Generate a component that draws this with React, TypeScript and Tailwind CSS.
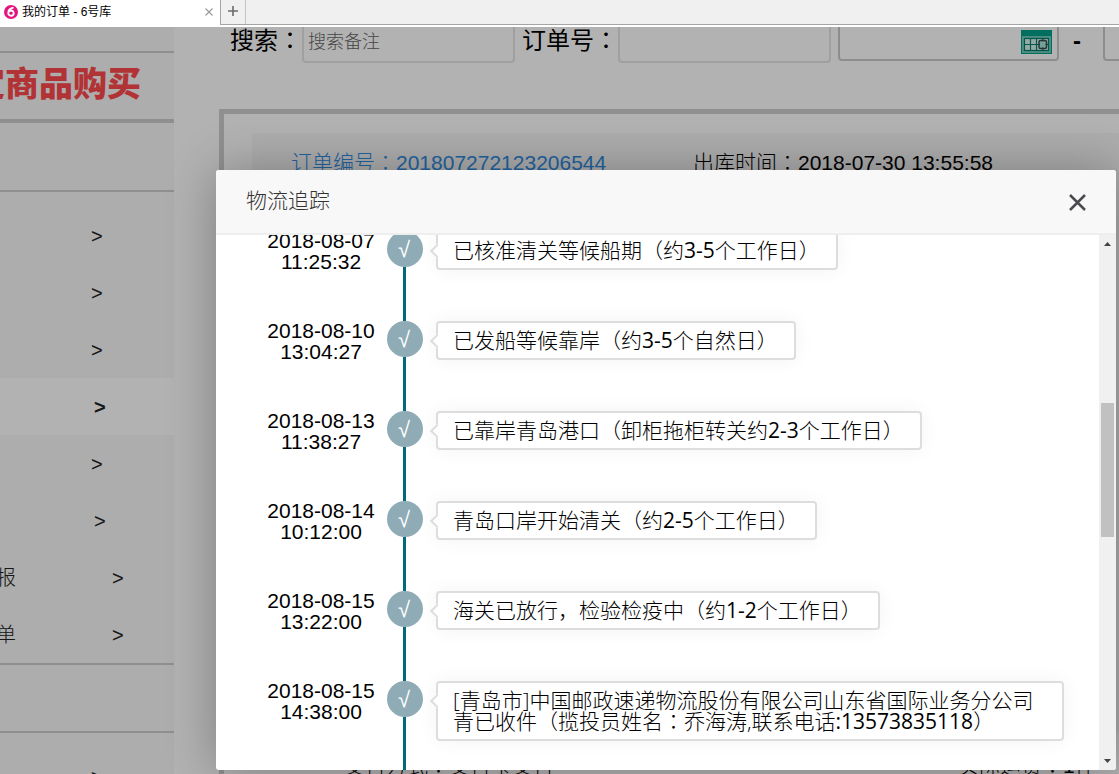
import React from "react";

const menu = [
  { label: "", gap: "ml-[75px]" },
  { label: "", gap: "ml-[75px]" },
  { label: "", gap: "ml-[75px]" },
  { label: "", gap: "ml-[78px]", active: true },
  { label: "", gap: "ml-[75px]" },
  { label: "", gap: "ml-[78px]" },
  { label: "报", gap: "ml-[96px]" },
  { label: "单", gap: "ml-[96px]" },
];

const events = [
  { date: "2018-08-07", time: "11:25:32", lines: ["已核准清关等候船期（约3-5个工作日）"] },
  { date: "2018-08-10", time: "13:04:27", lines: ["已发船等候靠岸（约3-5个自然日）"] },
  { date: "2018-08-13", time: "11:38:27", lines: ["已靠岸青岛港口（卸柜拖柜转关约2-3个工作日）"] },
  { date: "2018-08-14", time: "10:12:00", lines: ["青岛口岸开始清关（约2-5个工作日）"] },
  { date: "2018-08-15", time: "13:22:00", lines: ["海关已放行，检验检疫中（约1-2个工作日）"] },
  {
    date: "2018-08-15",
    time: "14:38:00",
    wide: true,
    lines: ["[青岛市]中国邮政速递物流股份有限公司山东省国际业务分公司", "青已收件（揽投员姓名：乔海涛,联系电话:13573835118）"],
  },
];

/* Latin digits are set in regular weight and full-width colons sit mid-cell. */
function Mixed({ text }: { text: string }) {
  return (
    <>
      {text.split(/([\d:-]+|：)/).map((part, i) => {
        if (part === "：") return <span key={i} className="font-['Noto_Sans_CJK_TC',sans-serif] leading-0">{part}</span>;
        if (/^[\d:-]+$/.test(part)) return <span key={i} className="font-normal">{part}</span>;
        return part;
      })}
    </>
  );
}

function TabBar() {
  return (
    <header className="flex h-[27px] shrink-0 bg-white text-xs text-black">
      <div className="flex w-[220px] items-center pb-1 pl-1">
        <svg className="size-[14px] shrink-0" viewBox="0 0 14 14">
          <circle cx="7" cy="7" r="7" fill="#e4147f" />
          <path d="M9.600 2.600C6.400 3 4.300 5 4.300 8a2.700 2.600 0 1 0 2.800-2.500c-1.100 0-2 .5-2.500 1.400" fill="none" stroke="#fff" strokeWidth="1.900" />
        </svg>
        <span className="ml-1 flex-1">我的订单 - 6号库</span>
        <button aria-label="关闭标签" className="mr-[7px]">
          <svg className="size-2" viewBox="0 0 8 8" stroke="#999" strokeWidth="1.1">
            <path d="M.5.5l7 7M7.5.5l-7 7" />
          </svg>
        </button>
      </div>
      <div className="flex h-[25px] flex-1 border-b border-l border-[#a5a5a5] bg-[#f0f0f0]">
        <button aria-label="新标签" className="flex w-[25px] items-center justify-center border-r border-[#c4c4c4] pb-0.5">
          <svg className="size-[10px]" viewBox="0 0 10 10" stroke="#6b6b6b" strokeWidth="1.6">
            <path d="M5 0v10M0 5h10" />
          </svg>
        </button>
      </div>
    </header>
  );
}

function Sidebar() {
  return (
    <nav className="w-[174px] shrink-0 bg-[#f8f8f8] text-[#222]">
      <div className="h-[26px] border-b-2 border-[#cdcdcd]" />
      <div className="flex h-[70px] items-center justify-end overflow-hidden border-b-4 border-[#cdcdcd] pr-[33px] pb-1 text-[34px] font-black whitespace-nowrap text-[#ff4a4e]">
        定商品购买
      </div>
      <div className="h-[69px] border-b-2 border-[#cdcdcd]" />
      <ul className="border-b-2 border-[#cdcdcd] pt-[15px]">
        {menu.map((m, i) => (
          <li key={i} className={m.active ? "bg-white font-bold" : ""}>
            <a href="#" className="flex h-[57px] items-center text-[20px]">
              <span className="flex w-4 justify-end overflow-hidden font-light">{m.label}</span>
              <span className={m.gap}>&gt;</span>
            </a>
          </li>
        ))}
      </ul>
      <div className="h-[68px] border-b-2 border-[#cdcdcd]" />
      <a href="#" className="mt-[15px] flex h-[57px] items-center pl-[91px] text-[20px]">
        &gt;
      </a>
    </nav>
  );
}

function CalendarIcon() {
  return (
    <svg className="h-6 w-[31px]" viewBox="0 0 31 24">
      <rect width="31" height="24" fill="#00a08a" />
      <rect x="1" y="6" width="29" height="17" fill="#6fc9b8" />
      <rect x="3.500" y="8.500" width="24" height="12" fill="#d8f3ee" stroke="#00806e" strokeWidth="1.2" />
      <path d="M3.500 14.500H18M9.500 8.500v12M15.500 8.500v12" fill="none" stroke="#00806e" strokeWidth="1.2" />
      <rect x="18" y="10.500" width="7.500" height="8" rx="1.500" fill="#a8e6da" stroke="#33514d" strokeWidth="1.500" />
      <path d="M21.800 8.500v3M21.800 17.500v3M16 14.500h3M24.500 14.500h3" stroke="#33514d" strokeWidth="1.200" />
    </svg>
  );
}

function Orders() {
  return (
    <main className="min-w-0 flex-1 bg-white text-black">
      <div className="flex h-[36px] pl-14 text-2xl whitespace-nowrap">
        <label htmlFor="q" className="w-[72px] shrink-0 leading-7"><Mixed text="搜索：" /></label>
        <input id="q" placeholder="搜索备注" className="h-[36px] w-[213px] shrink-0 rounded-b border-2 border-t-0 border-[#e6e6e6] px-1 pb-1 text-lg font-light placeholder:text-[#666]" />
        <label htmlFor="no" className="ml-[7px] w-24 shrink-0 leading-7"><Mixed text="订单号：" /></label>
        <input id="no" className="h-[36px] w-[213px] shrink-0 rounded-b border-2 border-t-0 border-[#e6e6e6] px-1" />
        <div className="ml-[7px] flex h-[34px] w-[221px] shrink-0 rounded-b border-2 border-t-0 border-[#cacaca] pr-[5px]">
          <input aria-label="开始日期" className="min-w-0 flex-1" />
          <button aria-label="选择日期" className="mt-[3px] h-6">
            <CalendarIcon />
          </button>
        </div>
        <span className="w-11 shrink-0 pr-2 text-center leading-7 font-bold">-</span>
        <input aria-label="结束日期" className="h-[34px] w-[221px] shrink-0 rounded-b border-2 border-t-0 border-[#cacaca]" />
      </div>
      <section className="mt-[46px] ml-[45px] h-[760px] w-[1000px] border-5 border-[#cfcfcf] pt-[19px] pl-7 text-[21px] leading-[21px] font-light">
        <div className="flex h-[600px] bg-[#f8f8f8] pt-[19px] pl-[39px]">
          <a href="#" className="w-[402px] text-[#2f8ee6]"><Mixed text="订单编号：201807272123206544" /></a>
          <span><Mixed text="出库时间：2018-07-30 13:55:58" /></span>
        </div>
        <div className="flex h-[60px] items-center pt-1 pl-[92px]">
          <span className="w-[614px]"><Mixed text="支付方式：支付宝支付" /></span>
          <span><Mixed text="实际运费：1件" /></span>
        </div>
      </section>
    </main>
  );
}

function TrackingDialog() {
  return (
    <section role="dialog" aria-label="物流追踪" className="flex min-w-0 flex-1 flex-col overflow-hidden rounded-[3px] bg-white shadow-[1px_1px_50px_rgba(0,0,0,0.3)]">
      <div className="flex h-[65px] shrink-0 items-center justify-between border-b-2 border-[#eee] bg-[#f8f8f8] px-[30px] text-[21px] font-light text-[#333]">
        <h2 className="pb-0.5">物流追踪</h2>
        <button aria-label="关闭" className="pt-0.5">
          <svg className="size-[17px]" viewBox="0 0 17 17" stroke="#4a4a4f" strokeWidth="2.5">
            <path d="M1 1l15 15M16 1L1 16" />
          </svg>
        </button>
      </div>
      <div className="flex min-h-0 flex-1 overflow-hidden">
        <ol className="-mt-1 min-w-0 flex-1 text-[21px] leading-[21px] text-black [clip-path:inset(4px_0_0_0)]">
          {events.map((e, i) => (
            <li key={i} className="flex h-[90px] pl-[48px]">
              <time className="-mt-px w-[114px] shrink-0 text-center">
                {e.date}
                <br />
                {e.time}
              </time>
              <div className="ml-[9px] flex w-9 shrink-0 flex-col">
                <span className="flex size-9 shrink-0 items-center justify-center rounded-full bg-[#8fabb6] pr-0.5 text-[22px] text-white">√</span>
                <span className="ml-4 w-[3px] flex-1 bg-[#03687a]" />
              </div>
              <div className="relative ml-[13px] self-start rounded border-2 border-[#ddd] bg-white py-[7px] pr-4 pl-[15px] font-['Open_Sans','Noto_Sans_CJK_SC',sans-serif] font-light whitespace-nowrap shadow-[0_0_20px_rgba(0,0,0,0.05)]">
                <i className="absolute top-[13px] -left-[6px] size-[10px] rotate-45 border-b-2 border-l-2 border-[#ddd] bg-white" />
                {e.lines.map((l) => (
                  <p key={l} className={e.wide ? "pr-[13px]" : ""}>
                    <Mixed text={l} />
                  </p>
                ))}
              </div>
            </li>
          ))}
        </ol>
        <div className="flex w-[17px] shrink-0 flex-col items-center bg-[#f0f0f0] pt-[7px] pb-[7px]">
          <svg className="h-1 w-[7px]" viewBox="0 0 7 4" fill="#444"><path d="M0 4L3.500 0 7 4z" /></svg>
          <div className="mt-[157px] h-[134px] w-[13px] bg-[#c1c1c1]" />
          <svg className="mt-auto h-1 w-[7px]" viewBox="0 0 7 4" fill="#444"><path d="M0 0h7L3.500 4z" /></svg>
        </div>
      </div>
    </section>
  );
}

export default function App() {
  return (
    <div className="flex h-screen flex-col overflow-hidden font-['Liberation_Sans','Noto_Sans_CJK_SC',sans-serif]">
      <TabBar />
      <div className="relative flex min-h-0 flex-1 overflow-hidden">
        <Sidebar />
        <Orders />
        <div className="absolute inset-0 flex bg-black/30 pt-[143px] pr-[3px] pb-1 pl-[216px]">
          <TrackingDialog />
        </div>
      </div>
    </div>
  );
}
